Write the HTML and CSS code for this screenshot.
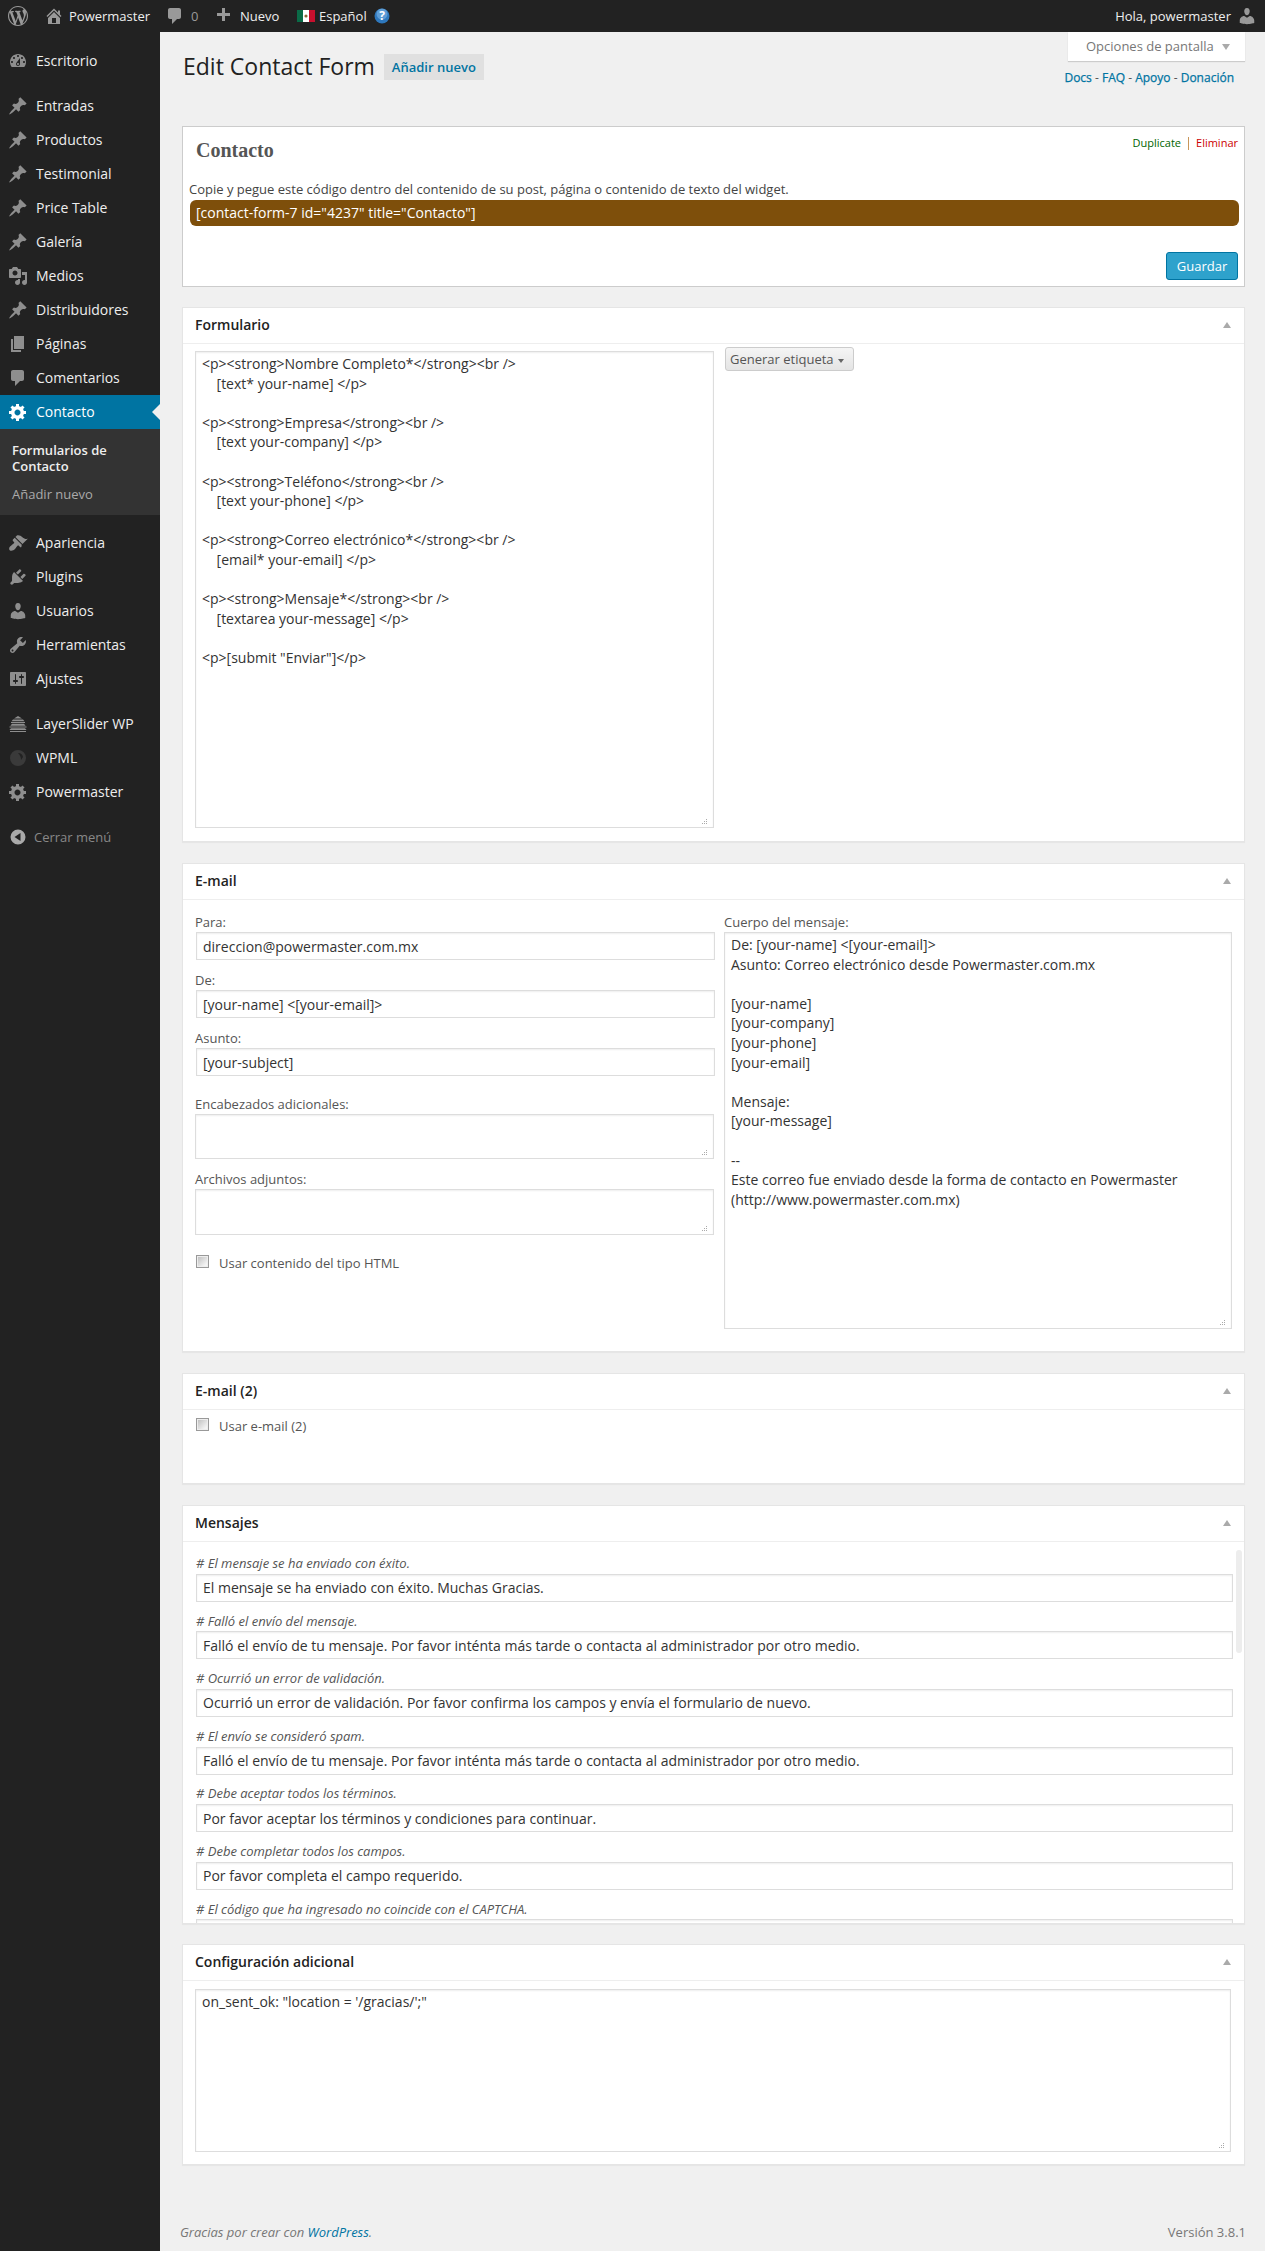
FILE: index.html
```html
<!DOCTYPE html>
<html lang="es">
<head>
<meta charset="utf-8">
<title>Edit Contact Form</title>
<link rel="stylesheet" href="styles.css">
</head>
<body>
<svg class="defs" width="0" height="0" aria-hidden="true">
  <symbol id="i-wp" viewBox="0 0 20 20"><path d="M20 10c0-5.51-4.49-10-10-10C4.48 0 0 4.49 0 10c0 5.52 4.48 10 10 10 5.51 0 10-4.48 10-10zM7.78 15.37L4.37 6.22c.55-.02 1.17-.08 1.17-.08.5-.06.44-1.13-.06-1.11 0 0-1.45.11-2.37.11-.18 0-.37 0-.58-.01C4.12 2.69 6.87 1.11 10 1.11c2.33 0 4.45.87 6.05 2.34-.68-.11-1.65.39-1.65 1.58 0 .74.45 1.36.9 2.1.35.61.55 1.36.55 2.46 0 1.49-1.4 5-1.4 5l-3.03-8.37c.54-.02.82-.17.82-.17.5-.05.44-1.25-.06-1.22 0 0-1.44.12-2.38.12-.87 0-2.33-.12-2.33-.12-.5-.03-.56 1.2-.06 1.22l.92.08 1.26 3.41zM17.41 10c.24-.64.74-1.87.43-4.25.7 1.29 1.05 2.71 1.05 4.25 0 3.29-1.73 6.24-4.4 7.78.97-2.59 1.94-5.2 2.92-7.78zM6.1 18.09C3.12 16.65 1.11 13.53 1.11 10c0-1.3.23-2.48.72-3.59C3.25 10.3 4.67 14.2 6.1 18.09zm4.03-6.63l2.58 6.98c-.86.29-1.76.45-2.71.45-.79 0-1.57-.11-2.29-.33.81-2.38 1.62-4.74 2.42-7.1z"/></symbol>
  <symbol id="i-home" viewBox="0 0 20 20"><path d="M16 8.5l1.53 1.53-1.06 1.06L10 4.62l-6.47 6.47-1.06-1.06L10 2.5l4 4v-2h2v4zm-6-2.46l6 5.99V18H4v-5.97zM12 17v-5H8v5h4z"/></symbol>
  <symbol id="i-comment" viewBox="0 0 20 20"><path d="M5 2h9c1.1 0 2 .9 2 2v7c0 1.1-.9 2-2 2h-2l-5 5v-5H5c-1.1 0-2-.9-2-2V4c0-1.1.9-2 2-2z"/></symbol>
  <symbol id="i-plus" viewBox="0 0 20 20"><path d="M17 7v3h-5v5H9v-5H4V7h5V2h3v5h5z"/></symbol>
  <symbol id="i-user" viewBox="0 0 20 20"><path d="M10 9.25c-2.27 0-2.73-3.44-2.73-3.44C7 4.02 7.82 2 9.97 2c2.16 0 2.98 2.02 2.71 3.81 0 0-.41 3.44-2.68 3.44zm0 2.57L12.72 10c2.39 0 4.52 2.33 4.52 4.53v2.49s-3.65 1.13-7.24 1.13c-3.65 0-7.24-1.13-7.24-1.13v-2.49c0-2.25 1.94-4.48 4.47-4.48z"/></symbol>
  <symbol id="i-dash" viewBox="0 0 20 20"><path d="M3.76 16h12.48c1.1-1.37 1.76-3.11 1.76-5 0-4.42-3.58-8-8-8s-8 3.58-8 8c0 1.89.66 3.63 1.76 5zM10 4c.55 0 1 .45 1 1s-.45 1-1 1-1-.45-1-1 .45-1 1-1zM6 6c.55 0 1 .45 1 1s-.45 1-1 1-1-.45-1-1 .45-1 1-1zm8 0c.55 0 1 .45 1 1s-.45 1-1 1-1-.45-1-1 .45-1 1-1zm-5.37 5.55L12 7v6c0 1.1-.9 2-2 2s-2-.9-2-2c0-.57.24-1.08.63-1.45zM4 10c.55 0 1 .45 1 1s-.45 1-1 1-1-.45-1-1 .45-1 1-1zm12 0c.55 0 1 .45 1 1s-.45 1-1 1-1-.45-1-1 .45-1 1-1zm-5 3c0-.55-.45-1-1-1s-1 .45-1 1 .45 1 1 1 1-.45 1-1z"/></symbol>
  <symbol id="i-pin" viewBox="0 0 20 20"><path d="M10.44 3.02l1.82-1.82 6.36 6.35-1.83 1.82c-1.05-.68-2.48-.57-3.41.36l-.75.75c-.92.93-1.04 2.35-.35 3.41l-1.83 1.82-2.41-2.41-2.8 2.79c-.42.42-3.38 2.71-3.8 2.29s1.86-3.39 2.28-3.81l2.79-2.79L4.1 9.36l1.83-1.82c1.05.69 2.48.57 3.4-.36l.75-.75c.93-.92 1.05-2.35.36-3.41z"/></symbol>
  <symbol id="i-media" viewBox="0 0 20 20"><path d="M13 11V4c0-.55-.45-1-1-1h-1.67L9 1H5L3.67 3H2c-.55 0-1 .45-1 1v7c0 .55.45 1 1 1h10c.55 0 1-.45 1-1zM7 4.5c1.38 0 2.5 1.12 2.5 2.5S8.38 9.5 7 9.5 4.5 8.38 4.5 7 5.62 4.5 7 4.5zM14 6h5v10.5c0 1.38-1.12 2.5-2.5 2.5S14 17.88 14 16.5s1.12-2.5 2.5-2.5c.17 0 .34.02.5.05V9h-3V6zm-4 8.05V13h2v3.5c0 1.38-1.12 2.5-2.5 2.5S7 17.88 7 16.5 8.12 14 9.5 14c.17 0 .34.02.5.05z"/></symbol>
  <symbol id="i-page" viewBox="0 0 20 20"><path d="M6 15V2h10v13H6zm-1 1h8v2H3V5h2v11z"/></symbol>
  <symbol id="i-gear" viewBox="0 0 20 20"><path fill-rule="evenodd" d="M18 12h-2.18c-.17.7-.44 1.35-.81 1.93l1.54 1.54-2.1 2.1-1.54-1.54c-.58.36-1.23.63-1.91.79V19H8v-2.18c-.68-.16-1.33-.43-1.91-.79l-1.54 1.54-2.12-2.12 1.54-1.54c-.36-.58-.63-1.23-.79-1.91H1V9.03h2.17c.16-.7.44-1.35.8-1.94L2.43 5.55l2.1-2.1 1.54 1.54c.58-.37 1.24-.64 1.93-.81V2h3v2.18c.68.16 1.33.43 1.91.79l1.54-1.54 2.12 2.12-1.54 1.54c.36.59.64 1.24.8 1.94H18V12zm-8.5 1.5c1.66 0 3-1.34 3-3s-1.34-3-3-3-3 1.34-3 3 1.34 3 3 3z"/></symbol>
  <symbol id="i-brush" viewBox="0 0 20 20"><path d="M14.48 11.06L7.41 3.99l1.5-1.5c.5-.56 2.3-.47 3.51.32 1.21.8 1.43 1.28 2.91 2.1 1.18.64 2.45 1.26 4.45.85zm-.71.71L6.7 4.7 4.93 6.47c-.39.39-.39 1.02 0 1.41l1.06 1.06c.39.39.39 1.03 0 1.42-.6.6-1.43 1.11-2.21 1.69-.35.26-.7.53-1.01.84C1.43 13.23.5 15.9 1.73 17.13c1.23 1.23 3.9.3 5.24-1.04.31-.31.58-.66.84-1.01.58-.78 1.09-1.61 1.69-2.21.39-.39 1.02-.39 1.41 0l1.06 1.06c.39.39 1.02.39 1.41 0z"/></symbol>
  <symbol id="i-plug" viewBox="0 0 20 20"><path d="M13.11 4.36L9.87 7.6 8 5.73l3.24-3.24c.35-.34 1.05-.2 1.56.32.52.51.66 1.21.31 1.55zm-8 1.77l.91-1.12 9.01 9.01-1.19.84c-.71.71-2.63 1.16-3.82 1.16H6.14L4.9 17.26c-.59.59-1.54.59-2.12 0-.59-.58-.59-1.53 0-2.12l1.24-1.24v-3.88c0-1.13.4-3.19 1.09-3.89zm7.26 3.97l3.24-3.24c.34-.35 1.04-.21 1.55.31.52.51.66 1.21.31 1.55l-3.24 3.25z"/></symbol>
  <symbol id="i-tool" viewBox="0 0 20 20"><path d="M16.68 9.77c-1.34 1.34-3.3 1.67-4.95.99l-5.41 6.52c-.99.99-2.59.99-3.58 0s-.99-2.59 0-3.57l6.52-5.42c-.68-1.65-.35-3.61.99-4.95 1.28-1.28 3.12-1.62 4.72-1.06l-2.89 2.89 2.82 2.82 2.86-2.87c.53 1.58.18 3.39-1.08 4.65zM3.81 16.21c.4.39 1.04.39 1.43 0 .4-.4.4-1.04 0-1.43-.39-.4-1.03-.4-1.43 0-.39.39-.39 1.03 0 1.43z"/></symbol>
  <symbol id="i-set" viewBox="0 0 20 20"><path d="M18 16V4c0-.55-.45-1-1-1H3c-.55 0-1 .45-1 1v12c0 .55.45 1 1 1h14c.55 0 1-.45 1-1zM8 11h1c.55 0 1 .45 1 1s-.45 1-1 1H8v1.5c0 .28-.22.5-.5.5s-.5-.22-.5-.5V13H6c-.55 0-1-.45-1-1s.45-1 1-1h1V5.5c0-.28.22-.5.5-.5s.5.22.5.5V11zm5-2h-1c-.55 0-1-.45-1-1s.45-1 1-1h1V5.5c0-.28.22-.5.5-.5s.5.22.5.5V7h1c.55 0 1 .45 1 1s-.45 1-1 1h-1v5.5c0 .28-.22.5-.5.5s-.5-.22-.5-.5V9z"/></symbol>
  <symbol id="i-layers" viewBox="0 0 20 20"><path d="M10 2l4 2.6H6zM5 5.4h10l1.5 1.8h-13zM3 8h14v.9H3zM4 9.7h12l1.6 2H2.4zM1.5 12.5h17v.9h-17zM3 14.2h14l1.6 1.9H1.4zM2 16.9h16V18H2z"/></symbol>
  <symbol id="i-wpml" viewBox="0 0 20 20"><path fill-rule="evenodd" d="M10 2a8 8 0 1 0 0 16 8 8 0 0 0 0-16zm0 3a5 5 0 0 1 5 4l-2 3c0-3-1-5-3-7z"/></symbol>
  <symbol id="i-collapse" viewBox="0 0 20 20"><path fill-rule="evenodd" d="M10 2.5a7.5 7.5 0 1 0 0 15 7.5 7.5 0 0 0 0-15zM12.5 6v8l-6-4z"/></symbol>
</svg>

<header class="adminbar">
  <div class="bar-left">
    <svg class="bar-ico bar-wp"><use href="#i-wp"/></svg>
    <span class="bar-item bar-site"><svg class="bar-ico"><use href="#i-home"/></svg>Powermaster</span>
    <span class="bar-item bar-comments"><svg class="bar-ico"><use href="#i-comment"/></svg>0</span>
    <span class="bar-item bar-new"><svg class="bar-ico"><use href="#i-plus"/></svg>Nuevo</span>
    <span class="bar-item bar-lang">
      <svg class="flag" viewBox="0 0 18 12"><rect width="6" height="12" fill="#0a6b47"/><rect x="6" width="6" height="12" fill="#fff"/><rect x="12" width="6" height="12" fill="#c8102e"/><circle cx="9" cy="6" r="1.6" fill="#8a6a3a"/></svg>
      Español
      <svg class="help" viewBox="0 0 16 16"><circle cx="8" cy="8" r="7.5" fill="#2e78bd"/><circle cx="8" cy="6" r="5.5" fill="#7fb6e6" opacity=".6"/><text x="8" y="12" text-anchor="middle" class="help-q">?</text></svg>
    </span>
  </div>
  <div class="bar-right">Hola, powermaster<svg class="bar-ico"><use href="#i-user"/></svg></div>
</header>

<div class="wrap">
  <nav class="sidebar">
    <ul class="menu menu-first">
      <li><svg class="mi"><use href="#i-dash"/></svg>Escritorio</li>
    </ul>
    <ul class="menu">
      <li><svg class="mi"><use href="#i-pin"/></svg>Entradas</li>
      <li><svg class="mi"><use href="#i-pin"/></svg>Productos</li>
      <li><svg class="mi"><use href="#i-pin"/></svg>Testimonial</li>
      <li><svg class="mi"><use href="#i-pin"/></svg>Price Table</li>
      <li><svg class="mi"><use href="#i-pin"/></svg>Galería</li>
      <li><svg class="mi"><use href="#i-media"/></svg>Medios</li>
      <li><svg class="mi"><use href="#i-pin"/></svg>Distribuidores</li>
      <li><svg class="mi"><use href="#i-page"/></svg>Páginas</li>
      <li><svg class="mi"><use href="#i-comment"/></svg>Comentarios</li>
      <li class="current"><svg class="mi"><use href="#i-gear"/></svg>Contacto</li>
    </ul>
    <ul class="submenu">
      <li class="sub-current">Formularios de Contacto</li>
      <li>Añadir nuevo</li>
    </ul>
    <ul class="menu">
      <li><svg class="mi"><use href="#i-brush"/></svg>Apariencia</li>
      <li><svg class="mi"><use href="#i-plug"/></svg>Plugins</li>
      <li><svg class="mi"><use href="#i-user"/></svg>Usuarios</li>
      <li><svg class="mi"><use href="#i-tool"/></svg>Herramientas</li>
      <li><svg class="mi"><use href="#i-set"/></svg>Ajustes</li>
    </ul>
    <ul class="menu">
      <li><svg class="mi"><use href="#i-layers"/></svg>LayerSlider WP</li>
      <li><svg class="mi mi-wpml"><use href="#i-wpml"/></svg>WPML</li>
      <li><svg class="mi"><use href="#i-gear"/></svg>Powermaster</li>
    </ul>
    <div class="collapse"><svg class="mi"><use href="#i-collapse"/></svg>Cerrar menú</div>
  </nav>

  <main class="main">
    <div class="page-head">
      <div class="title-row">
        <h1>Edit Contact Form</h1>
        <a class="add-new">Añadir nuevo</a>
      </div>
      <div class="head-right">
        <div class="screen-tab">Opciones de pantalla<span class="tab-arrow"></span></div>
        <div class="doc-links"><a>Docs</a> - <a>FAQ</a> - <a>Apoyo</a> - <a>Donación</a></div>
      </div>
    </div>

    <section class="form-box">
      <div class="form-top">
        <h2>Contacto</h2>
        <div class="actions"><a class="dup">Duplicate</a><span class="act-sep"></span><a class="del">Eliminar</a></div>
      </div>
      <p class="copy">Copie y pegue este código dentro del contenido de su post, página o contenido de texto del widget.</p>
      <div class="shortcode">[contact-form-7 id="4237" title="Contacto"]</div>
      <div class="save-row"><button class="save" type="button">Guardar</button></div>
    </section>

    <section class="panel">
      <header class="panel-head"><h3>Formulario</h3><span class="toggle"></span></header>
      <div class="panel-body form-grid">
        <textarea class="ta ta-form" spellcheck="false">&lt;p&gt;&lt;strong&gt;Nombre Completo*&lt;/strong&gt;&lt;br /&gt;
    [text* your-name] &lt;/p&gt;

&lt;p&gt;&lt;strong&gt;Empresa&lt;/strong&gt;&lt;br /&gt;
    [text your-company] &lt;/p&gt;

&lt;p&gt;&lt;strong&gt;Teléfono&lt;/strong&gt;&lt;br /&gt;
    [text your-phone] &lt;/p&gt;

&lt;p&gt;&lt;strong&gt;Correo electrónico*&lt;/strong&gt;&lt;br /&gt;
    [email* your-email] &lt;/p&gt;

&lt;p&gt;&lt;strong&gt;Mensaje*&lt;/strong&gt;&lt;br /&gt;
    [textarea your-message] &lt;/p&gt;

&lt;p&gt;[submit "Enviar"]&lt;/p&gt;</textarea>
        <button class="gen-tag" type="button">Generar etiqueta<span class="gen-arrow"></span></button>
      </div>
    </section>

    <section class="panel">
      <header class="panel-head"><h3>E-mail</h3><span class="toggle"></span></header>
      <div class="panel-body mail-grid">
        <div class="mail-left">
          <label class="lbl">Para:</label>
          <input class="inp" type="text" value="direccion@powermaster.com.mx">
          <label class="lbl">De:</label>
          <input class="inp" type="text" value="[your-name] <[your-email]>">
          <label class="lbl">Asunto:</label>
          <input class="inp" type="text" value="[your-subject]">
          <label class="lbl lbl-gap">Encabezados adicionales:</label>
          <textarea class="ta ta-small"></textarea>
          <label class="lbl">Archivos adjuntos:</label>
          <textarea class="ta ta-small ta-attach"></textarea>
          <label class="check"><input type="checkbox" class="cb">Usar contenido del tipo HTML</label>
        </div>
        <div class="mail-right">
          <label class="lbl">Cuerpo del mensaje:</label>
          <textarea class="ta ta-body" spellcheck="false">De: [your-name] &lt;[your-email]&gt;
Asunto: Correo electrónico desde Powermaster.com.mx

[your-name]
[your-company]
[your-phone]
[your-email]

Mensaje:
[your-message]

--
Este correo fue enviado desde la forma de contacto en Powermaster (http://www.powermaster.com.mx)</textarea>
        </div>
      </div>
    </section>

    <section class="panel">
      <header class="panel-head"><h3>E-mail (2)</h3><span class="toggle"></span></header>
      <div class="panel-body mail2">
        <label class="check"><input type="checkbox" class="cb">Usar e-mail (2)</label>
      </div>
    </section>

    <section class="panel panel-tight">
      <header class="panel-head"><h3>Mensajes</h3><span class="toggle"></span></header>
      <div class="panel-body messages">
        <label class="msg-lbl"># El mensaje se ha enviado con éxito.</label>
        <input class="inp msg-inp" type="text" value="El mensaje se ha enviado con éxito. Muchas Gracias.">
        <label class="msg-lbl"># Falló el envío del mensaje.</label>
        <input class="inp msg-inp" type="text" value="Falló el envío de tu mensaje. Por favor inténta más tarde o contacta al administrador por otro medio.">
        <label class="msg-lbl"># Ocurrió un error de validación.</label>
        <input class="inp msg-inp" type="text" value="Ocurrió un error de validación. Por favor confirma los campos y envía el formulario de nuevo.">
        <label class="msg-lbl"># El envío se consideró spam.</label>
        <input class="inp msg-inp" type="text" value="Falló el envío de tu mensaje. Por favor inténta más tarde o contacta al administrador por otro medio.">
        <label class="msg-lbl"># Debe aceptar todos los términos.</label>
        <input class="inp msg-inp" type="text" value="Por favor aceptar los términos y condiciones para continuar.">
        <label class="msg-lbl"># Debe completar todos los campos.</label>
        <input class="inp msg-inp" type="text" value="Por favor completa el campo requerido.">
        <label class="msg-lbl"># El código que ha ingresado no coincide con el CAPTCHA.</label>
        <input class="inp msg-inp" type="text" value="">
        <span class="thumb"></span>
      </div>
    </section>

    <section class="panel">
      <header class="panel-head"><h3>Configuración adicional</h3><span class="toggle"></span></header>
      <div class="panel-body extra">
        <textarea class="ta ta-extra" spellcheck="false">on_sent_ok: "location = '/gracias/';"</textarea>
      </div>
    </section>

    <footer class="foot">
      <span class="thanks">Gracias por crear con <a>WordPress</a>.</span>
      <span class="version">Versión 3.8.1</span>
    </footer>
  </main>
</div>
</body>
</html>
```
FILE: styles.css
```css
* { box-sizing: border-box; }
html, body { margin: 0; padding: 0; }
body {
  width: 1265px;
  min-height: 2251px;
  background: #f0f0f0;
  font-family: "Open Sans", sans-serif;
  font-size: 13px;
  line-height: 20px;
  color: #444;
  overflow-x: hidden;
}
.defs { position: absolute; }
ul { list-style: none; margin: 0; padding: 0; }
a { color: #0074a2; text-decoration: none; }
h1, h2, h3, p { margin: 0; }

/* admin bar */
.adminbar {
  height: 32px;
  background: #222;
  color: #eee;
  display: flex;
  justify-content: space-between;
  align-items: center;
  padding: 0 8px 0 8px;
}
.bar-left, .bar-right, .bar-item { display: flex; align-items: center; }
.bar-ico { width: 20px; height: 20px; fill: #999; flex: none; }
.bar-wp { margin-right: 16px; }
.bar-site { width: 121px; }
.bar-site .bar-ico { margin-right: 5px; }
.bar-comments { width: 48px; color: #999; }
.bar-comments .bar-ico { margin-right: 6px; }
.bar-new { width: 84px; }
.bar-new .bar-ico { margin-right: 7px; }
.flag { width: 18px; height: 12px; margin-right: 4px; }
.help { width: 16px; height: 16px; margin-left: 7px; }
.help-q { font: 700 12px "Open Sans", sans-serif; fill: #fff; }
.bar-right .bar-ico { margin-left: 6px; }

/* layout */
.wrap { display: flex; align-items: stretch; min-height: 2219px; }
.sidebar { width: 160px; flex: none; background: #222; padding-top: 12px; color: #eee; }
.main { flex: 1; min-width: 0; padding: 0 20px 0 22px; }

/* side menu */
.menu { margin-bottom: 11px; }
.menu li {
  height: 34px;
  display: flex;
  align-items: center;
  position: relative;
  font-size: 14px;
}
.mi { width: 20px; height: 20px; margin: 0 8px; fill: #8e8e8e; flex: none; }
.mi-wpml { fill: #3a3a3a; }
.menu .current { background: #0074a2; color: #fff; }
.current .mi { fill: #fff; }
.current::after {
  content: "";
  position: absolute;
  right: 0;
  top: 9px;
  border: 8px solid transparent;
  border-left-width: 0;
  border-right-color: #f0f0f0;
}
.menu:has(.current) { margin-bottom: 0; }
.submenu { background: #333; padding: 13px 12px 13px; margin-bottom: 11px; color: #aaa; }
.submenu li { line-height: 16px; margin-bottom: 12px; }
.submenu li:last-child { margin-bottom: 0; }
.submenu .sub-current { color: #eee; font-weight: 600; }
.collapse { display: flex; align-items: center; height: 34px; color: #888; font-size: 13px; margin-top: 8px; }
.collapse .mi { margin: 0 6px 0 8px; fill: #aaa; }

/* heading */
.page-head { height: 94px; display: flex; justify-content: space-between; }
.title-row { display: flex; align-items: flex-start; padding-top: 22px; }
h1 { font-size: 23px; font-weight: 400; line-height: 24px; color: #222; margin-left: 1px; }
.add-new {
  margin: 0 0 0 9px;
  height: 26px;
  line-height: 26px;
  padding: 0 8px;
  background: #e0e0e0;
  font-weight: 600;
  font-size: 13px;
}
.head-right { display: flex; flex-direction: column; align-items: flex-end; }
.screen-tab {
  width: 177px;
  height: 29px;
  background: #fff;
  box-shadow: 0 1px 1px rgba(0,0,0,.15);
  color: #777;
  padding: 4px 0 0 18px;
  display: flex;
  align-items: flex-start;
  font-size: 13px;
}
.tab-arrow {
  margin: 8px 0 0 8px;
  border: 4px solid transparent;
  border-top: 6px solid #aaa;
  border-bottom: 0;
}
.doc-links { margin: 7px 11px 0 0; font-size: 12px; line-height: 20px; color: #555; }
.doc-links a { font-weight: 400; -webkit-text-stroke: .25px #0074a2; }

/* top box */
.form-box { background: #fff; border: 1px solid #ccc; height: 161px; margin-bottom: 20px; }
.form-top { display: flex; justify-content: space-between; height: 52px; padding: 0 6px 0 13px; }
.form-top h2 { font: 700 20px/46px "Liberation Serif", serif; color: #555; }
.actions { display: flex; align-items: center; height: 16px; margin-top: 8px; font-size: 11px; line-height: 16px; }
.dup { color: #006400; }
.del { color: #c00; }
.act-sep { width: 1px; height: 13px; background: #c8965a; margin: 0 7px; }
.copy { padding-left: 6px; color: #444; margin-bottom: 1px; }
.shortcode {
  height: 26px;
  line-height: 26px;
  margin: 0 5px 0 7px;
  padding-left: 6px;
  background: #7e4f0b;
  border-radius: 6px;
  color: #fff;
  font-size: 14px;
}
.save-row { display: flex; justify-content: flex-end; margin-top: 26px; padding-right: 6px; }
.save {
  width: 72px;
  height: 28px;
  background: #2ea2cc;
  border: 1px solid #0074a2;
  border-radius: 3px;
  color: #fff;
  font: 13px "Open Sans", sans-serif;
  padding: 0;
}

/* panels */
.panel { background: #fff; border: 1px solid #e5e5e5; box-shadow: 0 1px 1px rgba(0,0,0,.04); margin-bottom: 21px; }
.panel-tight { margin-bottom: 20px; }
.panel-head {
  height: 36px;
  border-bottom: 1px solid #eee;
  display: flex;
  align-items: center;
  justify-content: space-between;
  padding: 0 13px 1px 12px;
}
h3 { font-size: 14px; font-weight: 600; color: #222; line-height: 20px; }
.toggle {
  border: 4px solid transparent;
  border-bottom: 6px solid #aaa;
  border-top: 0;
}
.ta, .inp {
  display: block;
  font-family: "Open Sans", sans-serif;
  font-size: 14px;
  line-height: 1.4;
  color: #333;
  background: #fff;
  border: 1px solid #ddd;
  box-shadow: inset 0 1px 2px rgba(0,0,0,.07);
  border-radius: 0;
  outline: 0;
  margin: 0;
}
.ta { padding: 2px 6px; resize: both; }
.ta::-webkit-resizer {
  background: url("data:image/svg+xml,%3Csvg xmlns='http://www.w3.org/2000/svg' width='15' height='15' fill='%23aaa'%3E%3Crect x='8' y='7' width='1' height='1'/%3E%3Crect x='6' y='9' width='1' height='1'/%3E%3Crect x='8' y='9' width='1' height='1'/%3E%3Crect x='4' y='11' width='1' height='1'/%3E%3Crect x='6' y='11' width='1' height='1'/%3E%3Crect x='8' y='11' width='1' height='1'/%3E%3C/svg%3E") no-repeat;
}
.inp { padding: 0 6px; height: 28px; }

.form-grid { display: flex; align-items: flex-start; padding: 7px 0 13px 12px; }
.ta-form { width: 519px; height: 477px; }
.gen-tag {
  margin: -4px 0 0 11px;
  width: 129px;
  height: 24px;
  padding: 0 0 0 4px;
  text-align: left;
  background: linear-gradient(#f5f5f5, #e4e4e4);
  border: 1px solid #ccc;
  border-radius: 3px;
  color: #555;
  font: 13px "Open Sans", sans-serif;
}
.gen-arrow {
  display: inline-block;
  vertical-align: middle;
  margin-left: 4px;
  border: 3px solid transparent;
  border-top: 4px solid #666;
  border-bottom: 0;
}

.mail-grid { display: grid; grid-template-columns: 520px 508px; column-gap: 9px; padding: 12px 0 22px 12px; align-items: start; }
.mail-left { display: flex; flex-direction: column; }
.lbl { display: block; line-height: 20px; color: #555; }
.mail-left .inp { width: 519px; margin: 0 0 10px 1px; }
.lbl-gap { margin-top: 8px; }
.ta-small { width: 519px; height: 45px; margin-bottom: 10px; }
.ta-attach { height: 46px; margin-bottom: 20px; }
.ta-body { width: 508px; height: 397px; }
.check { display: flex; align-items: flex-start; color: #555; line-height: 16px; margin-left: 1px; }
.cb {
  appearance: none;
  width: 13px;
  height: 13px;
  margin: 0 10px 0 0;
  border: 1px solid #999;
  background: linear-gradient(135deg, #bbb, #f4f4f4 80%);
  box-shadow: inset 0 0 0 1px #eee;
  flex: none;
}
.mail2 { height: 73px; padding: 8px 0 0 12px; }

.messages { height: 381px; overflow: hidden; padding: 12px 0 0 12px; position: relative; }
.msg-lbl { display: block; font-size: 13px; font-style: italic; line-height: 19.8px; color: #555; margin-left: 1px; }
.msg-inp { width: 1037px; margin: 0 0 9.8px 1px; }
.thumb {
  position: absolute;
  right: 2px;
  top: 8px;
  width: 6px;
  height: 103px;
  background: #ededed;
  border-radius: 3px;
}

.extra { padding: 8px 0 12px 12px; }
.ta-extra { width: 1036px; height: 163px; }

/* footer */
.foot { display: flex; justify-content: space-between; margin: 57px -1px 0 -2px; color: #777; line-height: 20px; }
.thanks { font-style: italic; }
```
